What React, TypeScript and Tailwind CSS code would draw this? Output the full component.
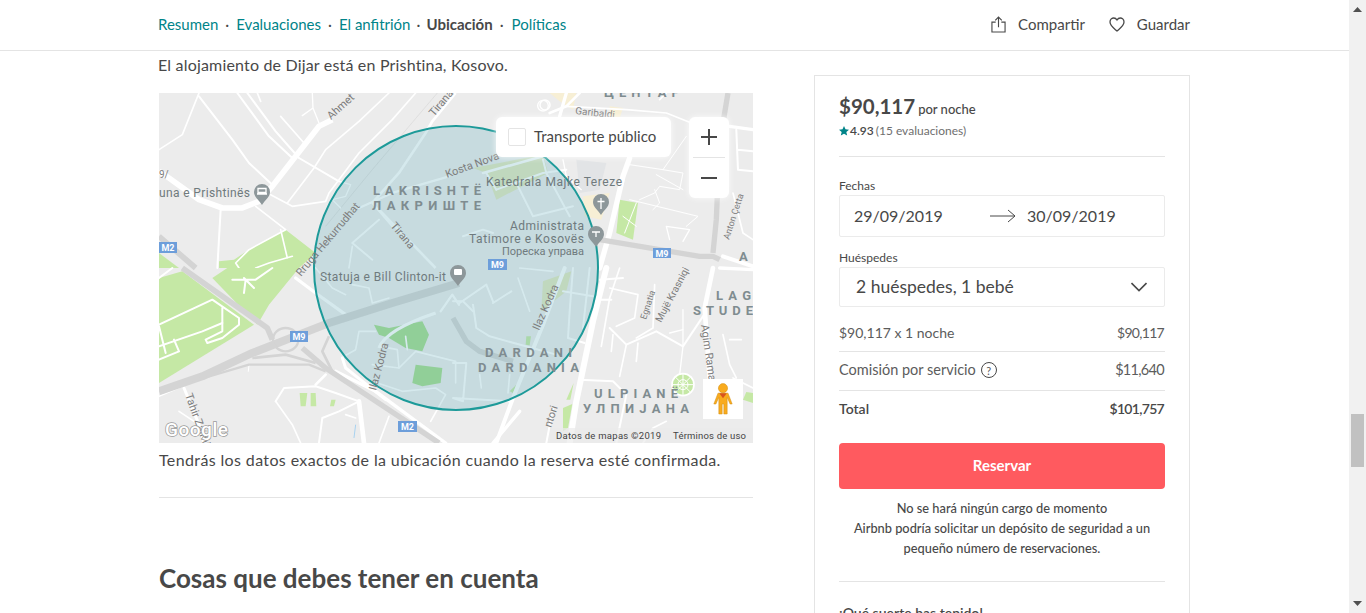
// Coordenadas de cada cuadrante en px x3, se escalan con el transform del <g>
type Road = [string, number]

const roadsNW: Road[] = [
  ['M120 0 L70 125 L0 170', 5],
  ['M120 10 L220 140 L270 210 L340 275', 6],
  ['M235 0 L330 130 L400 195', 6],
  ['M265 0 L350 115 L420 195 L540 265', 6],
  ['M295 0 L305 25', 5],
  ['M365 70 L435 150', 5],
  ['M460 0 L462 45 L480 90 M430 68 L462 45', 4],
  ['M690 0 L600 85 L500 170 L465 225 L385 330', 5],
  ['M770 0 L700 80 L600 180 L540 260 L510 300 L500 325 L400 340 L335 305', 5],
  ['M540 265 L575 275 L560 310 L520 320 L545 345', 4],
  ['M185 350 L175 525', 6],
  ['M290 340 L380 410 L270 470 L230 510 L240 525', 5],
  ['M365 410 L385 495 M400 490 L330 510 L290 525', 5],
  ['M870 250 L700 300 L600 345', 7],
  ['M700 400 L640 330 M660 380 L580 450 L640 500', 6],
  ['M580 460 L570 525', 5],
]

const roadsSW: Road[] = [
  ['M220 35 L290 35 L340 0 M255 30 L285 60 M260 35 L255 75', 6],
  ['M0 170 L160 95 L240 150 L240 170 L190 210 L145 225 L140 215 L190 190 L190 120', 6],
  ['M0 235 L130 190 L190 165 M0 175 L20 255 M45 215 L60 250 L0 275 M0 30 L40 0', 6],
  ['M75 360 L120 470 L135 525', 9],
  ['M80 350 L0 385 M120 470 L60 430', 5],
  ['M270 290 L268 310', 3],
  ['M350 400 L375 360 L470 355 L530 375 L600 400 L540 430 L490 450 L480 525', 6],
  ['M350 400 L400 470 L425 525', 5],
  ['M470 350 L500 320', 8],
  ['M600 400 L615 525', 14],
  ['M550 270 L560 300 L680 395', 9],
  ['M530 310 L650 370 L860 525', 10],
  ['M690 445 L660 525 M590 450 L560 440', 5],
  ['M410 30 L470 75 L560 140', 10],
  ['M470 0 L520 60 L560 80', 5],
  ['M580 50 L630 60 L640 105 M690 90 L640 105', 5],
  ['M600 190 L650 190 M600 190 L590 245 L555 265', 5],
  ['M640 290 L720 300 L715 245 L665 235', 5],
  ['M720 300 L770 250 L890 280 L890 345', 5],
  ['M640 340 L730 370 L830 360 L860 380 L815 460', 5],
  ['M740 205 L745 245', 5],
  ['M845 130 L880 80 L900 110', 7],
]

const roadsNE: Road[] = [
  ['M530 195 L510 250 L470 420 L440 525', 16],
  ['M380 0 L340 40 L290 60', 8],
  ['M340 0 L320 70', 10],
  ['M340 40 L520 50 L640 60 L740 100', 5],
  ['M620 20 L640 0', 5],
  ['M90 240 L270 190', 8],
  ['M130 290 L270 240 L340 230', 6],
  ['M190 270 L240 370 M240 370 L360 340', 6],
  ['M100 240 L130 290 M270 200 L280 240 L350 370', 6],
  ['M30 430 L90 410 L120 420', 6],
  ['M330 200 L340 250 L385 290', 4],
  ['M530 215 L630 230 L690 240 L680 290 L620 280 L605 300 L560 320', 3],
  ['M605 290 L620 330 L600 350', 3],
  ['M530 320 L735 370 L700 400', 3],
  ['M640 400 L710 410 L690 445 M640 400 L650 440', 4],
  ['M630 230 L700 130', 3],
  ['M610 245 L690 290', 3],
  ['M810 490 L900 520', 12],
  ['M830 100 L900 110', 10],
  ['M850 110 L855 230 L900 235 M855 170 L900 175', 6],
  ['M840 300 L870 420 L900 440', 5],
  ['M515 420 L550 330 M510 370 L550 400', 3],
]

const roadsSE: Road[] = [
  ['M460 0 L420 160 L370 400 L350 525', 18],
  ['M440 35 L510 30 M440 95 L475 95', 6],
  ['M500 0 L470 90 L445 235', 5],
  ['M470 180 L520 230 L610 190 L690 235 L760 130', 6],
  ['M490 175 L545 150 L555 80 L470 60', 5],
  ['M480 200 L475 250 M555 225 L550 280', 5],
  ['M550 210 L600 180 L605 50', 5],
  ['M520 230 L500 325', 5],
  ['M690 125 L690 235 L680 320', 4],
  ['M650 195 L690 185', 4],
  ['M780 0 L755 120 L770 330', 14],
  ['M800 0 L900 5', 10],
  ['M810 200 L830 290 L850 330 M830 215 L865 215', 5],
  ['M840 330 L900 360', 5],
  ['M380 335 L480 340 L520 380 L490 525', 6],
  ['M300 420 L280 525', 6],
  ['M200 430 L120 525', 10],
  ['M335 0 L270 170 L180 390 L130 525', 12],
  ['M60 110 L70 180 L110 205 L310 260', 6],
  ['M100 50 L120 100 M175 70 L120 105 M100 50 L20 105', 6],
  ['M0 100 L30 100 L60 130', 6],
  ['M195 30 L230 130', 5],
  ['M330 70 L420 85 M410 0 L390 180', 6],
  ['M360 0 L350 130 L345 210 L395 225', 6],
  ['M200 0 L300 10', 5],
  ['M0 285 L40 285 L30 400 L0 390 L170 400', 6],
  ['M80 320 L85 360 M170 320 L165 375', 5],
  ['M640 460 L600 480 L570 525', 5],
]

const streetLabels: { text: string; x: number; y: number; r: number; size?: number }[] = [
  { text: 'Ahmet', x: 331, y: 120, r: -42, size: 11 },
  { text: 'Tirana', x: 434, y: 117, r: -50, size: 11 },
  { text: 'Kosta Nova', x: 447, y: 178, r: -20, size: 11 },
  { text: 'Tirana', x: 390, y: 226, r: 50, size: 11 },
  { text: 'Rruga Hekurrudhat', x: 301, y: 277, r: -50, size: 11 },
  { text: 'Ilaz Kodra', x: 539, y: 331, r: -66, size: 11 },
  { text: 'Ilaz Kodra', x: 376, y: 391, r: -75, size: 11 },
  { text: 'Tahir Zajmi', x: 185, y: 395, r: 70, size: 11 },
  { text: 'Agim Rama', x: 701, y: 325, r: 82, size: 11 },
  { text: 'Anton Çetta', x: 729, y: 240, r: -72, size: 9 },
  { text: 'Egnatia', x: 646, y: 320, r: -72, size: 9 },
  { text: 'Mujë Krasniqi', x: 661, y: 323, r: -62, size: 10 },
  { text: 'ntori', x: 551, y: 428, r: -72, size: 11 },
  { text: 'Garibaldi', x: 575, y: 114, r: 6, size: 10 },
  { text: '9/', x: 159, y: 178, r: 0, size: 10 },
]

function Roads({ roads }: { roads: Road[] }) {
  return (
    <g fill="none" stroke="#fff" strokeLinecap="round" strokeLinejoin="round">
      {roads.map(([d, w], i) => (
        <path key={i} d={d} strokeWidth={w} />
      ))}
    </g>
  )
}

function Pin({ x, y }: { x: number; y: number }) {
  return <path d={`M${x} ${y} a8 8 0 0 1 8 8 c0 5 -5 8 -8 13 c-3 -5 -8 -8 -8 -13 a8 8 0 0 1 8 -8 Z`} fill="#8d979a" />
}

function MapArt() {
  return (
    <svg viewBox="159 93 594 350" className="block w-[594px] h-[350px] font-['Roboto',sans-serif]">
      <rect x="159" y="93" width="594" height="350" fill="#ececec" />

      {/* cuadrante NO */}
      <g transform="translate(159 93) scale(0.3333)">
        <path d="M380 410 L470 480 L420 525 L180 525 L180 505 L225 500 L270 470 Z" fill="#c5e8a5" />
        <path d="M0 480 L0 525 L60 525 Z" fill="#c5e8a5" />
        <path d="M835 0 L640 230 L500 400" fill="none" stroke="#d8d8d8" strokeWidth="2" />
        <path d="M520 80 L480 100 L340 280 L300 325 L250 345 L190 345 L120 320 L30 255 L0 235" fill="none" stroke="#fff" strokeWidth="17" strokeLinejoin="round" />
        <path d="M890 0 L820 85 L800 120 L720 240 L640 330 M660 350 L830 525" fill="none" stroke="#fff" strokeWidth="8" />
        <Roads roads={roadsNW} />
        <path d="M0 430 L110 525" fill="none" stroke="#d4d4d4" strokeWidth="17" />
      </g>

      {/* cuadrante SO */}
      <g transform="translate(159 268) scale(0.3333)">
        <path d="M0 30 L70 10 L285 170 L0 345 Z" fill="#c5e8a5" />
        <path d="M160 30 L205 0 L420 0 L330 110 L295 170 Z" fill="#c5e8a5" />
        <path d="M645 170 L690 180 L790 160 L810 200 L790 250 L740 240 L690 210 L660 200 Z" fill="#a5dc8e" />
        <path d="M770 290 L850 300 L845 345 L790 355 L760 345 Z" fill="#a5dc8e" />
        <path d="M422 375 L445 375 L440 415 L425 415 Z M455 375 L470 375 L472 415 L455 415 Z M517 395 L530 395 L525 415 L513 415 Z" fill="#c5e8a5" />
        <path d="M590 470 L585 510" stroke="#a8d2f0" strokeWidth="3" />
        <Roads roads={roadsSW} />
        <path d="M660 240 Q680 185 830 135" fill="none" stroke="#fff" strokeWidth="10" />

        {/* autopistas */}
        <g fill="none" stroke="#d4d4d4" strokeLinejoin="round">
          <path d="M70 0 L325 180 L340 215" strokeWidth="17" />
          <path d="M430 240 L500 300 L840 525" strokeWidth="16" />
          <path d="M0 370 L130 325 L280 255 L510 165 L700 105 L900 45" strokeWidth="24" />
          <path d="M280 270 L380 260 L470 285" strokeWidth="8" />
          <path d="M100 340 L270 290 L450 290 L500 310" strokeWidth="7" />
          <ellipse cx="380" cy="215" rx="38" ry="35" strokeWidth="7" />
          <path d="M510 205 L490 250 L520 310" strokeWidth="8" />
        </g>
      </g>

      {/* cuadrante NE */}
      <g transform="translate(453 93) scale(0.3333)">
        <path d="M290 0 L370 0 L360 50 L320 25 Z M470 40 L510 45 L500 75 L470 70 Z M390 310 L470 300 L445 380 L395 370 Z" fill="#f7efd5" />
        <path d="M60 225 L270 185 L285 240 L130 320 L100 240 Z" fill="#e3e8c0" />
        <path d="M500 320 L555 330 L540 440 L490 420 Z" fill="#c5e8a5" />
        <path d="M370 200 L460 210 L440 290 L380 300 Z" fill="#e2e4e6" />
        <Roads roads={roadsNE} />
        <circle cx="270" cy="38" r="16" fill="none" stroke="#fff" strokeWidth="4" />
        <g fill="none" stroke="#d4d4d4" strokeLinejoin="round">
          <path d="M825 0 L800 150 L790 380 L780 480" strokeWidth="16" />
          <path d="M440 440 L740 490 L780 490 L800 500" strokeWidth="16" />
        </g>
      </g>

      {/* cuadrante SE */}
      <g transform="translate(453 268) scale(0.3333)">
        <path d="M340 395 L362 345 L352 395 Z M330 420 L358 408 L345 480 L330 490 Z M880 372 L900 375 L900 405 L870 395 Z M220 205 L234 205 L230 232 L218 230 Z M170 370 L190 350 L180 375 Z" fill="#c5e8a5" />
        <path d="M270 40 L355 10 L340 70 L265 130 Z" fill="#e3e8c0" />
        <Roads roads={roadsSE} />
        <path d="M0 150 L40 220 L80 250 L180 280" fill="none" stroke="#d4d4d4" strokeWidth="16" />
        <circle cx="690" cy="350" r="33" fill="#c5e8a5" stroke="#fff" strokeWidth="5" />
        <path d="M665 325 L715 375 M715 325 L665 375 M690 318 L690 382 M658 350 L722 350" stroke="#fff" strokeWidth="3" />
        <circle cx="690" cy="350" r="15" fill="none" stroke="#fff" strokeWidth="3" />
      </g>

      {/* circulo de la zona */}
      <circle cx="456" cy="268" r="142" fill="#58a8b8" fillOpacity="0.25" stroke="#1d9a99" strokeWidth="2" />

      {/* barrios */}
      <g fill="#7f8c90" fontWeight="700" fontSize="13">
        <text x="373" y="195" textLength="108">LAKRISHTË</text>
        <text x="372" y="210" textLength="109">ЛАКРИШТЕ</text>
        <text x="485" y="357" textLength="87">DARDANI</text>
        <text x="478" y="372" textLength="101">DARDANIA</text>
        <text x="594" y="398" textLength="84">ULPIANË</text>
        <text x="583" y="413" textLength="106">УЛПИЈАНА</text>
        <text x="716" y="300" textLength="35">LAG</text>
        <text x="693" y="315" textLength="60">STUDE</text>
        <text x="739" y="261">A</text>
        <text x="604" y="97" textLength="76">ЦЕНТАР</text>
      </g>

      {/* lugares */}
      <g fill="#6f7a7d" fontSize="12">
        <text x="486" y="186" textLength="136">Katedrala Majke Tereze</text>
        <text x="510" y="230" textLength="74">Administrata</text>
        <text x="469" y="243" textLength="115">Tatimore e Kosovës</text>
        <text x="502" y="255" fontSize="11" textLength="82">Пореска управа</text>
        <text x="320" y="281" textLength="126">Statuja e Bill Clinton-it</text>
        <text x="159" y="197" textLength="91">una e Prishtinës</text>
      </g>

      {/* nombres de calles */}
      <g fill="#7d7d7d">
        {streetLabels.map((s, i) => (
          <text key={i} x={s.x} y={s.y} fontSize={s.size} transform={`rotate(${s.r} ${s.x} ${s.y})`}>
            {s.text}
          </text>
        ))}
      </g>

      {/* pines */}
      <Pin x={262} y={184} />
      <Pin x={601} y={194} />
      <Pin x={596} y={226} />
      <Pin x={458} y={265} />
      <path d="M257 194 h10 M258 188.500 h8 v4 h-8 Z M601 198 v11 M597.500 201.500 h7 M592 232 h8 M596 232 v5" stroke="#fff" strokeWidth="1.300" fill="none" />
      <rect x="454" y="269" width="8" height="6" rx="1" fill="#fff" />
      <circle cx="545" cy="105" r="5" fill="none" stroke="#fff" strokeWidth="1.500" />

      {/* escudos */}
      <g fontSize="9" fontWeight="700" fill="#fff" textAnchor="middle">
        <rect x="159" y="242" width="18" height="11" fill="#6d9eda" />
        <text x="168" y="251">M2</text>
        <rect x="488" y="259" width="19" height="11" fill="#6d9eda" />
        <text x="497.500" y="268">M9</text>
        <rect x="653" y="248" width="18" height="10" fill="#6d9eda" />
        <text x="662" y="256.500">M9</text>
        <rect x="290" y="331" width="18" height="11" fill="#6d9eda" />
        <text x="299" y="340">M9</text>
        <rect x="398" y="421" width="19" height="11" fill="#6d9eda" />
        <text x="407.500" y="430">M2</text>
      </g>

      {/* pie del mapa */}
      <text
        x="165"
        y="436"
        fontSize="19"
        fontWeight="500"
        fill="#fff"
        stroke="#9a9a9a"
        strokeWidth="1.500"
        paintOrder="stroke"
        textLength="63"
      >
        Google
      </text>
      <rect x="550" y="428" width="203" height="15" fill="#ebebeb" fillOpacity="0.7" />
      <g fontSize="9.500" fill="#444">
        <text x="556" y="439" textLength="105">Datos de mapas ©2019</text>
        <text x="673" y="439" textLength="73">Términos de uso</text>
      </g>
    </svg>
  )
}

function Pegman() {
  return (
    <svg viewBox="0 0 24 38" className="w-[20px] h-[32px]">
      <circle cx="12" cy="6" r="5.500" fill="#f9ab1e" stroke="#d18f12" strokeWidth="0.600" />
      <path d="M6 12 H18 L23 25 H20.500 L17 17 V37 H13 V25 H11 V37 H7 V17 L3.500 25 H1 Z" fill="#f9ab1e" stroke="#d18f12" strokeWidth="0.600" />
      <path d="M7.500 12 L12 18 L16.500 12 Z" fill="#d8541e" />
    </svg>
  )
}

export default function App() {
  return (
    <div className="flex h-[613px] overflow-hidden bg-white text-[#484848] font-['Lato','Noto_Sans',sans-serif]">
      <div className="flex-1 min-w-0">
        {/* Barra superior */}
        <header className="h-[51px] border-b border-[#e4e4e4]">
          <div className="mx-auto flex h-[50px] w-[1031px] items-center justify-between pb-[2px] text-[15px]">
            <nav className="flex items-center text-[#008489] -ml-px">
              <span>Resumen</span>
              <span className="mx-[7px] text-[#484848]">·</span>
              <span>Evaluaciones</span>
              <span className="mx-[7px] text-[#484848]">·</span>
              <span>El anfitrión</span>
              <span className="mx-[6px] text-[#484848]">·</span>
              <span className="font-bold text-[#484848]">Ubicación</span>
              <span className="ml-[7px] mr-[8px] text-[#484848]">·</span>
              <span>Políticas</span>
            </nav>
            <div className="flex items-center">
              <svg viewBox="0 0 16 18" className="w-[15px] h-[17px] mr-[12px]" fill="none" stroke="#484848" strokeWidth="1.200">
                <path d="M5 6.500 H1 V17 H15 V6.500 H11" />
                <path d="M8 12 V1 M4.500 4.500 L8 1 L11.500 4.500" />
              </svg>
              <span>Compartir</span>
              <svg viewBox="0 0 16 15" className="w-[16px] h-[15px] ml-[24px] mr-[12px]" fill="none" stroke="#484848" strokeWidth="1.300">
                <path d="M8 14 C4 10.500 1 8.500 1 5 C1 2.500 3 1 4.800 1 C6.200 1 7.300 1.800 8 3 C8.700 1.800 9.800 1 11.200 1 C13 1 15 2.500 15 5 C15 8.500 12 10.500 8 14 Z" />
              </svg>
              <span>Guardar</span>
            </div>
          </div>
        </header>

        <main className="mx-auto flex w-[1031px] justify-between">
          {/* Columna izquierda */}
          <section className="w-[594px]">
            <p className="mt-[2px] -ml-px h-[24px] text-[16px] leading-[24px] tracking-[0.18px]">El alojamiento de Dijar está en Prishtina, Kosovo.</p>
            <div className="relative mt-[16px] h-[350px]">
              <MapArt />
              <div className="absolute left-[337px] top-[24px] flex h-[40px] w-[175px] items-center rounded-[6px] bg-white pb-px pl-[12px] text-[15px] shadow-[0_0_6px_rgba(255,255,255,0.8)]">
                <span className="mr-[8px] h-[18px] w-[18px] rounded-[2px] border border-[#e4e4e4]" />
                Transporte público
              </div>
              <div className="absolute left-[530px] top-[24px] flex h-[81px] w-[40px] flex-col items-center rounded-[6px] bg-white shadow-[0_0_6px_rgba(255,255,255,0.8)]">
                <svg viewBox="0 0 16 16" className="mt-[12px] w-[16px] h-[16px]" stroke="#484848" strokeWidth="2">
                  <path d="M0 8 H16 M8 0 V16" />
                </svg>
                <div className="mt-[12px] h-px w-[32px] bg-[#e4e4e4]" />
                <svg viewBox="0 0 16 16" className="mt-[12px] w-[16px] h-[16px]" stroke="#484848" strokeWidth="2">
                  <path d="M0 8 H16" />
                </svg>
              </div>
              <div className="absolute left-[544px] top-[286px] flex h-[40px] w-[40px] items-center justify-center bg-white">
                <Pegman />
              </div>
            </div>
            <p className="mt-[5px] h-[24px] text-[16px] leading-[24px] tracking-[0.37px]">Tendrás los datos exactos de la ubicación cuando la reserva esté confirmada.</p>
            <div className="mt-[25px] h-px bg-[#e4e4e4]" />
            <h2 className="mt-[63px] text-[26px] leading-[34px] font-bold">Cosas que debes tener en cuenta</h2>
          </section>

          {/* Tarjeta de reserva */}
          <aside className="mt-[24px] w-[376px] border border-[#e4e4e4] px-[24px] h-[600px]">
            <div className="mt-[15px] flex items-baseline h-[30px]">
              <span className="text-[20.500px] font-bold leading-[30px]">$90,117</span>
              <span className="ml-[3px] text-[13px] font-medium">por noche</span>
            </div>
            <div className="mt-[2px] flex items-center h-[16px] text-[12px]">
              <svg viewBox="0 0 12 12" className="w-[10px] h-[10px]" fill="#008489">
                <path d="M6 0 L7.800 4 L12 4.400 L8.800 7.200 L9.800 11.500 L6 9.200 L2.200 11.500 L3.200 7.200 L0 4.400 L4.200 4 Z" />
              </svg>
              <span className="ml-px font-semibold">4.93</span>
              <span className="ml-[2px] text-[#6f6f6f]">(15 evaluaciones)</span>
            </div>
            <div className="mt-[17px] h-px bg-[#e4e4e4]" />

            <div className="mt-[22px] text-[12px] leading-[14px]">Fechas</div>
            <div className="mt-[2px] flex h-[42px] items-center rounded-[2px] border border-[#ebebeb] pl-[14px] text-[16px]">
              <span className="w-[136px]">29/09/2019</span>
              <svg viewBox="0 0 26 14" className="w-[26px] h-[14px]" fill="none" stroke="#484848" strokeWidth="1">
                <path d="M0 7 H25 M18 1 L25 7 L18 13" />
              </svg>
              <span className="ml-[11px]">30/09/2019</span>
            </div>

            <div className="mt-[14px] text-[12px] leading-[14px]">Huéspedes</div>
            <div className="mt-[2px] flex h-[40px] items-center justify-between rounded-[2px] border border-[#ebebeb] pl-[16px] pr-[17px] text-[17.500px]">
              <span>2 huéspedes, 1 bebé</span>
              <svg viewBox="0 0 16 10" className="w-[16px] h-[10px]" fill="none" stroke="#484848" strokeWidth="1.600">
                <path d="M0.500 1 L8 8.500 L15.500 1" />
              </svg>
            </div>

            <div className="mt-[14px] flex h-[22px] items-center justify-between text-[14px] text-[#5c5c5c]">
              <span>$90,117 x 1 noche</span>
              <span className="mr-px tracking-[-0.7px]">$90,117</span>
            </div>
            <div className="mt-[8px] h-px bg-[#e4e4e4]" />
            <div className="mt-[7px] flex h-[22px] items-center justify-between text-[14.500px] text-[#5c5c5c]">
              <span className="flex items-center">
                Comisión por servicio
                <span className="ml-[5px] flex h-[16px] w-[16px] items-center justify-center rounded-full border border-[#484848] text-[11px] leading-none">?</span>
              </span>
              <span className="mr-px tracking-[-0.7px]">$11,640</span>
            </div>
            <div className="mt-[9px] h-px bg-[#e4e4e4]" />
            <div className="mt-[6px] flex h-[22px] items-center justify-between text-[14px] font-semibold">
              <span>Total</span>
              <span className="mr-px tracking-[-0.7px]">$101,757</span>
            </div>

            <button className="mt-[24px] block h-[46px] w-full rounded-[4px] bg-[#ff5a5f] pb-[2px] text-[15px] font-bold text-white">Reservar</button>

            <div className="mt-[9px] text-center text-[12.800px] leading-[20px] font-medium">
              <p>No se hará ningún cargo de momento</p>
              <p>Airbnb podría solicitar un depósito de seguridad a un</p>
              <p>pequeño número de reservaciones.</p>
            </div>
            <div className="mt-[23px] h-px bg-[#e4e4e4]" />
            <p className="mt-[20px] text-[14px] font-semibold">¡Qué suerte has tenido!</p>
          </aside>
        </main>
      </div>

      {/* Barra de desplazamiento */}
      <div className="relative w-[17px] shrink-0 bg-[#f1f1f1]">
        <svg viewBox="0 0 9 5" className="absolute left-[4px] top-[7px] w-[9px] h-[5px]" fill="#505050">
          <path d="M4.500 0 L9 5 H0 Z" />
        </svg>
        <div className="absolute left-[2px] top-[414px] h-[53px] w-[13px] bg-[#c1c1c1]" />
        <svg viewBox="0 0 9 5" className="absolute left-[4px] bottom-[7px] w-[9px] h-[5px]" fill="#505050">
          <path d="M0 0 H9 L4.500 5 Z" />
        </svg>
      </div>
    </div>
  )
}
